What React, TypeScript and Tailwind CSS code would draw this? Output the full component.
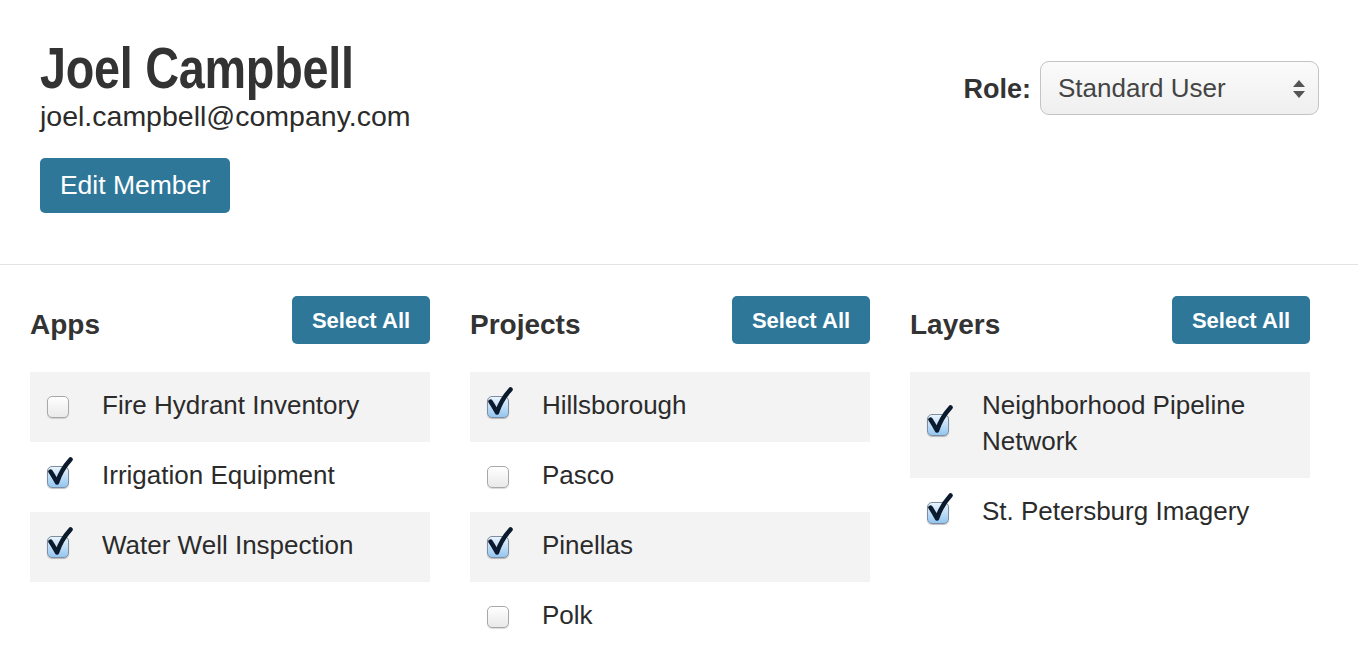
import React from "react";

type Item = { label: string; checked: boolean };

const columns: { title: string; items: Item[] }[] = [
  {
    title: "Apps",
    items: [
      { label: "Fire Hydrant Inventory", checked: false },
      { label: "Irrigation Equipment", checked: true },
      { label: "Water Well Inspection", checked: true },
    ],
  },
  {
    title: "Projects",
    items: [
      { label: "Hillsborough", checked: true },
      { label: "Pasco", checked: false },
      { label: "Pinellas", checked: true },
      { label: "Polk", checked: false },
    ],
  },
  {
    title: "Layers",
    items: [
      { label: "Neighborhood Pipeline Network", checked: true },
      { label: "St. Petersburg Imagery", checked: true },
    ],
  },
];

function CheckBox({ checked }: { checked: boolean }) {
  return (
    <div className="relative w-[22px] h-[22px] shrink-0 mt-[4px]">
      {checked ? (
        <div className="w-[22px] h-[22px] rounded-[5px] border border-[#7d8ea3] bg-gradient-to-b from-[#eaf4fd] to-[#94c6ef] shadow-[0_1px_1px_rgba(0,0,0,0.25)]" />
      ) : (
        <div className="w-[22px] h-[22px] rounded-[5px] border border-[#a8a8a8] bg-gradient-to-b from-[#ffffff] to-[#e9e9e9] shadow-[0_1px_1px_rgba(0,0,0,0.15)]" />
      )}
      {checked && (
        <svg className="absolute left-0 top-[-9px]" width="27" height="31" viewBox="0 0 27 31" fill="none">
          <path d="M3.5 14.5 Q6.5 19 10 25.5 Q14 13 23.5 2.5" stroke="#0b1a2c" strokeWidth="4.5" strokeLinecap="round" strokeLinejoin="round" />
        </svg>
      )}
    </div>
  );
}

function Column({ title, items }: { title: string; items: Item[] }) {
  return (
    <div className="w-[400px]">
      <div className="flex items-center justify-between h-[48px]">
        <h3 className="text-[28px] font-bold text-[#333] mt-[10px]">{title}</h3>
        <button className="w-[138px] h-[48px] rounded-[5px] bg-[#2e7799] text-white text-[22px] font-bold">
          Select All
        </button>
      </div>
      <ul className="mt-[28px]">
        {items.map((it, i) => (
          <li
            key={it.label}
            className={`flex items-center min-h-[70px] pt-[15px] pb-[19px] pl-[17px] pr-4 ${i % 2 === 0 ? "bg-[#f3f3f3]" : "bg-white"}`}
          >
            <CheckBox checked={it.checked} />
            <span className="ml-[33px] text-[26px] leading-[36px] text-[#2b2b2b]">{it.label}</span>
          </li>
        ))}
      </ul>
    </div>
  );
}

export default function App() {
  return (
    <div className="min-h-screen bg-white font-['Liberation_Sans',Arial,sans-serif] text-[#333]">
      <header className="flex justify-between pl-[40px] pr-[39px] pt-[38px] pb-[51px] border-b border-[#e3e3e3]">
        <div>
          <h1 className="origin-left scale-x-[0.82] font-bold text-[57px] leading-[60px] tracking-[-0.3px] text-[#333] whitespace-nowrap">
            Joel Campbell
          </h1>
          <p className="text-[28.5px] leading-[32px] mt-[2px] text-[#2b2b2b]">joel.campbell@company.com</p>
          <button className="mt-[26px] w-[190px] h-[55px] rounded-[5px] bg-[#2e7799] text-white text-[26.5px]">
            Edit Member
          </button>
        </div>
        <div className="flex items-center gap-[9px] h-[54px] mt-[23px]">
          <span className="text-[27px] font-bold text-[#333] mt-[2px]">Role:</span>
          <div className="relative flex items-center w-[279px] h-[54px] rounded-[9px] border border-[#c4c4c4] bg-gradient-to-b from-[#fbfbfb] to-[#efefef] pl-[17px]">
            <span className="text-[26px] text-[#444]">Standard User</span>
            <svg className="absolute right-[13px] top-[18px]" width="12" height="19" viewBox="0 0 12 19">
              <path d="M6 0 L12 7 L0 7 Z" fill="#555" />
              <path d="M0 11 L12 11 L6 18 Z" fill="#555" />
            </svg>
          </div>
        </div>
      </header>
      <main className="flex gap-[40px] pl-[30px] pt-[31px]">
        {columns.map((c) => (
          <Column key={c.title} title={c.title} items={c.items} />
        ))}
      </main>
    </div>
  );
}
